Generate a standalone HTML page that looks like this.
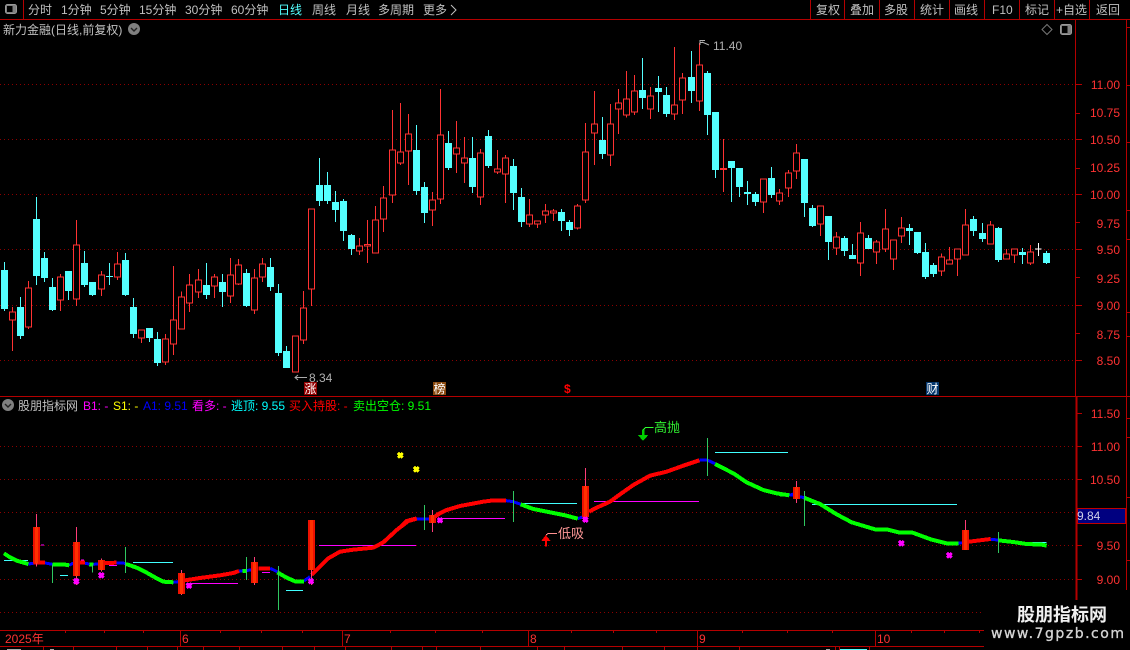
<!DOCTYPE html>
<html><head><meta charset="utf-8"><style>
html,body{margin:0;padding:0;background:#000;width:1130px;height:650px;overflow:hidden}
svg{display:block}
text{font-family:"Liberation Sans","WenQuanYi Zen Hei","Noto Sans CJK SC",sans-serif;font-size:12px}
.t text{fill:#c0c0c0}
.ax text{fill:#ff3232;text-anchor:end}
</style></head><body>
<svg width="1130" height="650" viewBox="0 0 1130 650" xmlns="http://www.w3.org/2000/svg">
<defs><path id="m" d="M-7-7L7 7M7-7L-7 7M-7 0H7M0-5V5" fill="none" stroke-width="9"/></defs>
<rect width="1130" height="650" fill="#000"/>

<!-- grid -->
<g stroke="#8c0000" stroke-dasharray="1 3" fill="none" shape-rendering="crispEdges">
<path d="M0 84.5H1075M0 139.5H1075M0 194.5H1075M0 249.5H1075M0 305.5H1075M0 360.5H1075M0 446.5H1075M0 479.5H1075M0 512.5H1075M0 545.5H1075M0 579.5H1075M0 612.5H1075"/>
</g>

<!-- frame -->
<g stroke="#b40000" fill="none" shape-rendering="crispEdges">
<path d="M0 19.5H1130M23.5 0V19M810.5 0V19M844.5 0V19M879.5 0V19M914.5 0V19M949.5 0V19M984.5 0V19M1019.5 0V19M1054.5 0V19M1089.5 0V19"/>
<path d="M1075.5 20V396M1126.5 20V590M0 396.5H1130"/>
<path d="M1076.5 397V600" stroke-width="2"/>
<path d="M0 630.5H984M0 646.5H984"/>
<path d="M180.5 631V646M342.5 631V646M528.5 631V646M697.5 631V646M875.5 631V646"/>
<path d="M65.5 630V633M104.5 630V633M143.5 630V633M220.5 630V633M261.5 630V633M302.5 630V633M390.5 630V633M435.5 630V633M482.5 630V633M571.5 630V633M613.5 630V633M656.5 630V633M742.5 630V633M787.5 630V633M832.5 630V633M911.5 630V633M944.5 630V633M979.5 630V633"/>
<path d="M43.5 646V650M73.5 646V650M116.5 646V650M147.5 646V650M177.5 646V650M203.5 646V650M239.5 646V650M282.5 646V650M314.5 646V650M345.5 646V650M391.5 646V650M436.5 646V650M422.5 646V650M480.5 646V650M537.5 646V650M564.5 646V650M622.5 646V650M664.5 646V650M697.5 646V650M739.5 646V650M835.5 646V650M839.5 646V650M869.5 646V650"/>
<path d="M1076 84.5H1082M1076 113.5H1080M1076 139.5H1082M1076 168.5H1080M1076 194.5H1082M1076 222.5H1080M1076 249.5H1082M1076 277.5H1080M1076 305.5H1082M1076 333.5H1080M1076 360.5H1082"/>
<path d="M1077 413.5H1082M1077 446.5H1082M1077 479.5H1082M1077 545.5H1082M1077 579.5H1082"/>
<path d="M1127 27.5H1130M1127 85.5H1130M1127 142.5H1130M1127 210.5H1130M1127 239.5H1130M1127 312.5H1130M1127 336.5H1130M1127 418.5H1130M1127 437.5H1130M1127 497.5H1130M1127 560.5H1130"/>
</g>

<!-- 9.84 box -->
<rect x="1077.5" y="508.5" width="48" height="15" fill="#000080" stroke="#c00000" shape-rendering="crispEdges"/>
<text x="1077" y="520" fill="#d0d0e8">9.84</text>

<!-- toolbar -->
<g class="t">
<rect x="5.5" y="4.5" width="11" height="9" rx="2" fill="#808080" stroke="#999"/>
<rect x="7" y="6" width="5.5" height="6" fill="#000"/>
<text x="28" y="14">分时</text><text x="61" y="14">1分钟</text><text x="100" y="14">5分钟</text><text x="139" y="14">15分钟</text><text x="185" y="14">30分钟</text><text x="231" y="14">60分钟</text>
<text x="278" y="14" style="fill:#54ffff">日线</text><text x="312" y="14">周线</text><text x="346" y="14">月线</text><text x="378" y="14">多周期</text><text x="423" y="14">更多</text>
<path d="M451 5l5 5-5 5" fill="none" stroke="#c0c0c0"/>
<text x="816" y="14">复权</text><text x="850" y="14">叠加</text><text x="884" y="14">多股</text><text x="920" y="14">统计</text><text x="954" y="14">画线</text><text x="992" y="14">F10</text><text x="1025" y="14">标记</text><text x="1056" y="14">+自选</text><text x="1096" y="14">返回</text>
<text x="3" y="34">新力金融(日线,前复权)</text>
</g>
<circle cx="134" cy="29" r="6" fill="#808080"/><path d="M131 28l3 3 3-3" fill="none" stroke="#222" stroke-width="1.4"/>
<path d="M1047 24.5l5 5-5 5-5-5z" fill="none" stroke="#777"/>
<rect x="1060.5" y="24.5" width="11" height="10" rx="2" fill="#808080" stroke="#999"/><rect x="1062" y="26" width="5.5" height="7" fill="#000"/>

<!-- Candles A -->
<g transform="translate(0 190) scale(.33333)" shape-rendering="crispEdges">
<path fill="none" stroke="#54ffff" stroke-width="3" d="M13.5 216V363M61.5 321V447M109.5 21V285M133.5 186V276M157.5 264V363M205.5 243V330M253.5 183V291M277.5 276V318M328.5 219V285M376.5 189V318M400.5 324V444M448.5 414V456M472.5 426V528M619.5 219V327M667.5 252V351M739.5 237V351M811.5 204V303M835.5 282V498M859.5 468V534"/>
<path fill="#54ffff" d="M3 240h21V357H3zM51 351h21V438H51zM99 87h21V258H99zM123 204h21V264H123zM147 291h21V360H147zM195 243h21V303H195zM243 219h21V285H243zM267 276h21V315H267zM318 258h21V261H318zM366 210h21V315H366zM390 351h21V432H390zM438 414h21V444H438zM462 447h21V519H462zM609 285h21V315H609zM657 276h21V306H657zM729 249h21V348H729zM801 231h21V291H801zM825 309h21V489H825zM849 483h21V534H849z"/>
<path fill="none" stroke="#ff3232" stroke-width="3" d="M37.5 351V483M85.5 273V417M181.5 252V363M229.5 90V348M304.5 243V318M352.5 186V270M424.5 418V459M496.5 432V525M520.5 228V495M544.5 304V419M568.5 252V366M595.5 237V324M643.5 252V324M691.5 204V339M715.5 207V285M763.5 237V372M787.5 204V276M886.5 436V548M910.5 303V462M934.5 55V348"/>
<path fill="#000" stroke="#ff3232" stroke-width="3" d="M28.5 365.5h18V390.5h-18zM76.5 293.5h18V411.5h-18zM172.5 260.5h18V330.5h-18zM220.5 164.5h18V327.5h-18zM295.5 254.5h18V297.5h-18zM343.5 221.5h18V261.5h-18zM415.5 419.5h18V444.5h-18zM487.5 446.5h18V516.5h-18zM511.5 389.5h18V462.5h-18zM535.5 320.5h18V417.5h-18zM559.5 284.5h18V339.5h-18zM586.5 269.5h18V306.5h-18zM634.5 260.5h18V288.5h-18zM682.5 254.5h18V318.5h-18zM706.5 224.5h18V282.5h-18zM754.5 263.5h18V360.5h-18zM778.5 221.5h18V261.5h-18zM877.5 437.5h18V546.5h-18zM901.5 353.5h18V450.5h-18zM925.5 56.5h18V296.5h-18z"/>
</g>

<!-- Candles B -->
<g transform="translate(300 60) scale(.33333)" shape-rendering="crispEdges">
<path fill="none" stroke="#54ffff" stroke-width="3" d="M58.5 294V438M82.5 336V432M106.5 393V486M130.5 417V543M154.5 522V585M349.5 195V405M373.5 366V489M445.5 213V330M517.5 231V399M565.5 210V324M640.5 297V450M664.5 384V501M784.5 447V513M808.5 480V528"/>
<path fill="#54ffff" d="M48 375h21V423H48zM72 375h21V423H72zM96 426h21V450H96zM120 423h21V513H120zM144 525h21V567H144zM339 270h21V393H339zM363 381h21V459H363zM435 249h21V324H435zM507 294h21V381H507zM555 228h21V318H555zM630 318h21V399H630zM654 411h21V486H654zM774 456h21V483H774zM798 486h21V510H798z"/>
<path fill="none" stroke="#ff3232" stroke-width="3" d="M178.5 534V585M202.5 480V609M226.5 438V581M250.5 378V516M277.5 150V429M301.5 129V315M325.5 162V375M397.5 396V498M421.5 87V432M469.5 183V339M493.5 231V369M541.5 267V435M592.5 270V342M616.5 285V429M688.5 417V501M712.5 481V504M736.5 432V489M760.5 447V483M832.5 432V509M856.5 189V429"/>
<path fill="#000" stroke="#ff3232" stroke-width="3" d="M169.5 557.5h18V573.5h-18zM193.5 553.5h18V558.5h-18zM217.5 479.5h18V579.5h-18zM241.5 413.5h18V477.5h-18zM268.5 269.5h18V405.5h-18zM292.5 275.5h18V309.5h-18zM316.5 221.5h18V273.5h-18zM388.5 419.5h18V450.5h-18zM412.5 224.5h18V417.5h-18zM460.5 263.5h18V282.5h-18zM484.5 293.5h18V309.5h-18zM532.5 278.5h18V411.5h-18zM583.5 326.5h18V336.5h-18zM607.5 293.5h18V342.5h-18zM679.5 464.5h18V492.5h-18zM703.5 482.5h18V492.5h-18zM727.5 452.5h18V465.5h-18zM751.5 452.5h18V459.5h-18zM823.5 437.5h18V504.5h-18zM847.5 275.5h18V420.5h-18z"/>
</g>

<!-- Candles C -->
<g transform="translate(580 30) scale(.33333)" shape-rendering="crispEdges">
<path fill="none" stroke="#54ffff" stroke-width="3" d="M67.5 261V387M187.5 84V237M235.5 138V246M259.5 171V261M334.5 63V219M382.5 123V315M406.5 246V444M454.5 393V516M478.5 414V501M502.5 453V525M526.5 486V528M574.5 411V504M673.5 387V561M697.5 525V591M745.5 558V690M793.5 618V678"/>
<path fill="#54ffff" d="M57 330h21V372H57zM177 180h21V204H177zM225 174h21V186H225zM249 195h21V252H249zM324 141h21V183H324zM372 129h21V255H372zM396 246h21V420H396zM444 393h21V414H444zM468 414h21V471H468zM492 486h21V492H492zM516 492h21V516H516zM564 444h21V495H564zM663 387h21V519H663zM687 534h21V588H687zM735 558h21V636H735zM783 624h21V663H783z"/>
<path fill="none" stroke="#ff3232" stroke-width="3" d="M43.5 183V405M91.5 222V408M115.5 177V312M139.5 123V263M163.5 135V255M211.5 171V267M283.5 51V270M307.5 129V252M358.5 39V243M430.5 327V486M550.5 445V549M598.5 477V525M625.5 420V501M649.5 342V447M721.5 526V618M769.5 606V675"/>
<path fill="#000" stroke="#ff3232" stroke-width="3" d="M34.5 281.5h18V309.5h-18zM82.5 281.5h18V375.5h-18zM106.5 218.5h18V237.5h-18zM130.5 206.5h18V255.5h-18zM154.5 182.5h18V246.5h-18zM202.5 197.5h18V237.5h-18zM274.5 224.5h18V252.5h-18zM298.5 143.5h18V210.5h-18zM349.5 104.5h18V213.5h-18zM421.5 415.5h18V418.5h-18zM541.5 446.5h18V516.5h-18zM589.5 488.5h18V513.5h-18zM616.5 428.5h18V474.5h-18zM640.5 368.5h18V423.5h-18zM712.5 527.5h18V582.5h-18zM760.5 620.5h18V654.5h-18z"/>
</g>

<!-- Candles D -->
<g transform="translate(800 190) scale(.33333)" shape-rendering="crispEdges">
<path fill="none" stroke="#54ffff" stroke-width="3" d="M157.5 162V207M205.5 135V177M328.5 102V165M352.5 126V192M376.5 159V267M400.5 219V261M520.5 78V138M547.5 99V156M595.5 111V216M667.5 174V222M739.5 183V222"/>
<path fill="#54ffff" d="M147 195h21V207H147zM195 144h21V177H195zM318 114h21V123H318zM342 126h21V189H342zM366 186h21V261H366zM390 225h21V252H390zM510 87h21V123H510zM537 129h21V147H537zM585 114h21V210H585zM657 186h21V195H657zM729 189h21V219H729z"/>
<path fill="none" stroke="#ff3232" stroke-width="3" d="M181.5 96V258M229.5 150V222M256.5 57V186M280.5 148V240M304.5 81V159M424.5 190V258M448.5 171V224M472.5 175V258M496.5 57V197M571.5 93V164M619.5 177V209M643.5 175V219M691.5 165V225"/>
<path fill="#000" stroke="#ff3232" stroke-width="3" d="M172.5 128.5h18V219.5h-18zM220.5 155.5h18V186.5h-18zM247.5 116.5h18V177.5h-18zM271.5 149.5h18V207.5h-18zM295.5 113.5h18V138.5h-18zM415.5 200.5h18V243.5h-18zM439.5 209.5h18V222.5h-18zM463.5 176.5h18V207.5h-18zM487.5 104.5h18V195.5h-18zM562.5 104.5h18V162.5h-18zM610.5 191.5h18V207.5h-18zM634.5 176.5h18V195.5h-18zM682.5 185.5h18V219.5h-18z"/>
<path fill="none" stroke="#fff" stroke-width="3" d="M715.5 159V198M705 177.5H724"/>
</g>

<!-- price annotations -->
<path d="M295 377.5H307M298 375l-3 2.5 3 2.5" fill="none" stroke="#aaa"/>
<text x="309" y="382" fill="#b0b0b0">8.34</text>
<path d="M700 40.5h5M700 42.5l3 0M700 40v5M702 42l7 3" fill="none" stroke="#b0b0b0"/>
<text x="713" y="50" fill="#b0b0b0">11.40</text>
<rect x="304" y="382" width="13" height="13" fill="#900000"/><text x="304.5" y="393" fill="#fff">涨</text>
<rect x="433" y="382" width="13" height="13" fill="#8a4a10"/><text x="433.5" y="393" fill="#fff">榜</text>
<text x="564" y="393" fill="#ff0000" style="font-weight:bold">$</text>
<rect x="926" y="382" width="13" height="13" fill="#06386e"/><text x="926.5" y="393" fill="#fff">财</text>

<!-- axis labels -->
<g class="ax">
<text x="1120" y="89">11.00</text><text x="1120" y="117">10.75</text><text x="1120" y="144">10.50</text><text x="1120" y="172">10.25</text><text x="1120" y="199">10.00</text>
<text x="1120" y="228">9.75</text><text x="1120" y="254">9.50</text><text x="1120" y="283">9.25</text><text x="1120" y="310">9.00</text><text x="1120" y="339">8.75</text><text x="1120" y="365">8.50</text>
<text x="1120" y="418">11.50</text><text x="1120" y="451">11.00</text><text x="1120" y="484">10.50</text><text x="1120" y="550">9.50</text><text x="1120" y="584">9.00</text>
</g>

<!-- legend -->
<circle cx="8" cy="405" r="6" fill="#808080"/><path d="M5 404l3 3 3-3" fill="none" stroke="#222" stroke-width="1.4"/>
<text x="18" y="410" fill="#c0c0c0">股朋指标网</text>
<text x="83" y="410" fill="#ff00ff">B1: -</text>
<text x="113" y="410" fill="#ffff00">S1: -</text>
<text x="143" y="410" fill="#0000ff">A1: 9.51</text>
<text x="192" y="410" fill="#ff00ff">看多: -</text>
<text x="231" y="410" fill="#00ffff">逃顶: 9.55</text>
<text x="289" y="410" fill="#ff0000">买入持股: -</text>
<text x="353" y="410" fill="#00ff00">卖出空仓: 9.51</text>

<!-- Lower pane 1 -->
<g transform="translate(0 395) scale(.33333)" shape-rendering="crispEdges">
<path fill="none" stroke="#40ffff" stroke-width="3" d="M12 496.5H84M180 541.5H204M399 502.5H519M858 586.5H909"/>
<path fill="none" stroke="#ff00ff" stroke-width="3" d="M123 449.5H132M243 494.5H252M327 511.5H351M561 565.5H714M786 532.5H810M957 451.5H1248"/>
<path fill="none" stroke="#0000ff" stroke-width="9" d="M85 507L100 505M135 504L157 508M208 511L220 504M255 505L268 507M280 508L295 507M350 504L378 505M520 562L535 560M717 528L755 525M810 520L832 530M912 558L930 545M1250 372L1285 372"/>
<path fill="none" stroke="#00ff00" stroke-width="12" stroke-linejoin="round" d="M12 475L30 487L50 497L85 507M157 508L190 508L208 511M268 508L280 509M378 507L410 518L440 533L470 550L490 560L520 562M728 528L740 528M832 532L860 548L885 559L912 559"/>
<path fill="none" stroke="#ff0000" stroke-width="12" stroke-linejoin="round" d="M100 503L135 503M238 503L255 503M295 505L350 503M555 556L600 549L660 541L700 534L717 528M775 520L810 520M935 540L985 490L1020 470L1060 464L1120 458L1150 442L1190 405L1225 378L1250 371M1300 368L1320 355"/>
<path fill="none" stroke="#2fc860" stroke-width="3" d="M157.5 508V564M277.5 508V533M376.5 456V534M739.5 486V555M835.5 513V645M1273.5 330V405"/>
<path fill="none" stroke="#ff3c78" stroke-width="3" d="M109.5 357V515M229.5 396V570M304.5 490V530M544.5 525V600M763.5 486V570M934.5 525V570M1297.5 345V411"/>
<path fill="#ee1100" d="M99 396h21V505H99zM219 441h21V543H219zM294 495h21V525H294zM534 534h21V597H534zM753 501h21V564H753zM924 375h21V525H924zM1287 360h21V384H1287z"/>
<path fill="#ff3000" d="M105 396h9V505H105zM225 441h9V543H225zM300 495h9V525H300zM540 534h9V597H540zM759 501h9V564H759zM930 375h9V525H930zM1293 360h9V384H1293z"/>
<g stroke="#ff00ff"><use href="#m" x="229" y="559"/><use href="#m" x="304" y="541"/><use href="#m" x="567" y="572"/><use href="#m" x="933" y="559"/></g>
<g stroke="#ffff00"><use href="#m" x="1201" y="181"/><use href="#m" x="1249" y="223"/></g>
</g>

<!-- Lower pane 2 -->
<g transform="translate(400 395) scale(.33333)" shape-rendering="crispEdges">
<path fill="none" stroke="#40ffff" stroke-width="3" d="M362 325.5H531M945 172.5H1164"/>
<path fill="none" stroke="#ff00ff" stroke-width="3" d="M120 370.5H315M582 319.5H897"/>
<path fill="none" stroke="#0000ff" stroke-width="9" d="M50 372L88 372M318 317L340 320L362 328M533 371L548 366M898 195L922 195L945 206M1168 301L1180 297"/>
<path fill="none" stroke="#00ff00" stroke-width="12" stroke-linejoin="round" d="M362 328L400 342L450 352L500 362L533 371M945 207L1000 235L1040 262L1090 285L1130 295L1168 301"/>
<path fill="none" stroke="#ff0000" stroke-width="12" stroke-linejoin="round" d="M0 398L20 378L50 370M110 360L140 345L180 333L250 320L280 316L318 316M567 350L590 338L630 320L660 298L700 270L750 242L800 230L850 212L898 196"/>
<path fill="none" stroke="#2fc860" stroke-width="3" d="M73.5 330V405M340.5 288V381M922.5 129V243"/>
<path fill="none" stroke="#ff3c78" stroke-width="3" d="M97.5 345V411M556.5 219V370M1189.5 258V324"/>
<path fill="#ee1100" d="M87 360h21V384H87zM546 273h21V366H546zM1179 276h21V312H1179z"/>
<path fill="#ff3000" d="M93 360h9V384H93zM552 273h9V366H552zM1185 276h9V312H1185z"/>
<g stroke="#ff00ff"><use href="#m" x="120" y="376"/><use href="#m" x="556" y="374"/></g>
<path fill="#ff0000" d="M437 420L452 438H441V455H435V438H424z"/>
<path fill="none" stroke="#ff9090" stroke-width="3" d="M438 420L444 415.5H471"/>
<path fill="#00d000" d="M726 104H733V120H745L729 138L714 120H726z"/>
<path fill="none" stroke="#30ff30" stroke-width="3" d="M730 104L736 97.5H761"/>
</g>
<text x="558" y="538" fill="#ff9898" style="font-size:13px">低吸</text>
<text x="654" y="432" fill="#30ee30" style="font-size:13px">高抛</text>

<!-- Lower pane 3 -->
<g transform="translate(780 395) scale(.33333)" shape-rendering="crispEdges">
<path fill="none" stroke="#40ffff" stroke-width="3" d="M0 172.5H24M96 328.5H531M740 442.5H799"/>
<path fill="none" stroke="#0000ff" stroke-width="9" d="M28 300L40 300M60 305L72 308M535 445L546 443M632 433L655 435"/>
<path fill="none" stroke="#00ff00" stroke-width="12" stroke-linejoin="round" d="M0 298L28 300M72 308L120 327L170 358L215 382L285 403L320 403L355 412L395 412L455 434L500 445L535 445M655 436L700 441L740 447L785 449L800 452"/>
<path fill="none" stroke="#ff0000" stroke-width="12" stroke-linejoin="round" d="M567 440L600 436L632 432"/>
<path fill="none" stroke="#2fc860" stroke-width="3" d="M73.5 288V393M655.5 411V474"/>
<path fill="none" stroke="#ff3c78" stroke-width="3" d="M49.5 258V324M556.5 375V465"/>
<path fill="#ee1100" d="M39 276h21V312H39zM546 405h21V465H546z"/>
<path fill="#ff3000" d="M45 276h9V312H45zM552 405h9V465H552z"/>
<g stroke="#ff00ff"><use href="#m" x="364" y="445"/><use href="#m" x="508" y="481"/></g>
</g>

<!-- time axis -->
<g fill="#ff3232">
<text x="5" y="643">2025年</text><text x="182" y="643">6</text><text x="344" y="643">7</text><text x="530" y="643">8</text><text x="699" y="643">9</text><text x="877" y="643">10</text>
</g>
<g fill="#aaa" shape-rendering="crispEdges"><rect x="7" y="649" width="14" height="1"/><rect x="50" y="649" width="4" height="1"/><rect x="840" y="649" width="27" height="1" fill="#54ffff"/><rect x="826" y="649" width="4" height="1"/></g>

<!-- watermark -->
<rect x="984" y="600" width="146" height="50" fill="#000"/>
<text x="1017" y="621" fill="#f0f0f0" style="font-family:'Noto Sans CJK SC',sans-serif;font-size:18px;font-weight:bold">股朋指标网</text>
<text x="991" y="638" fill="#d4d4d4" stroke="#d4d4d4" stroke-width=".35" textLength="133" lengthAdjust="spacing" style="font-family:'DejaVu Sans',sans-serif;font-size:14px">www.7gpzb.com</text>
</svg>
</body></html>
